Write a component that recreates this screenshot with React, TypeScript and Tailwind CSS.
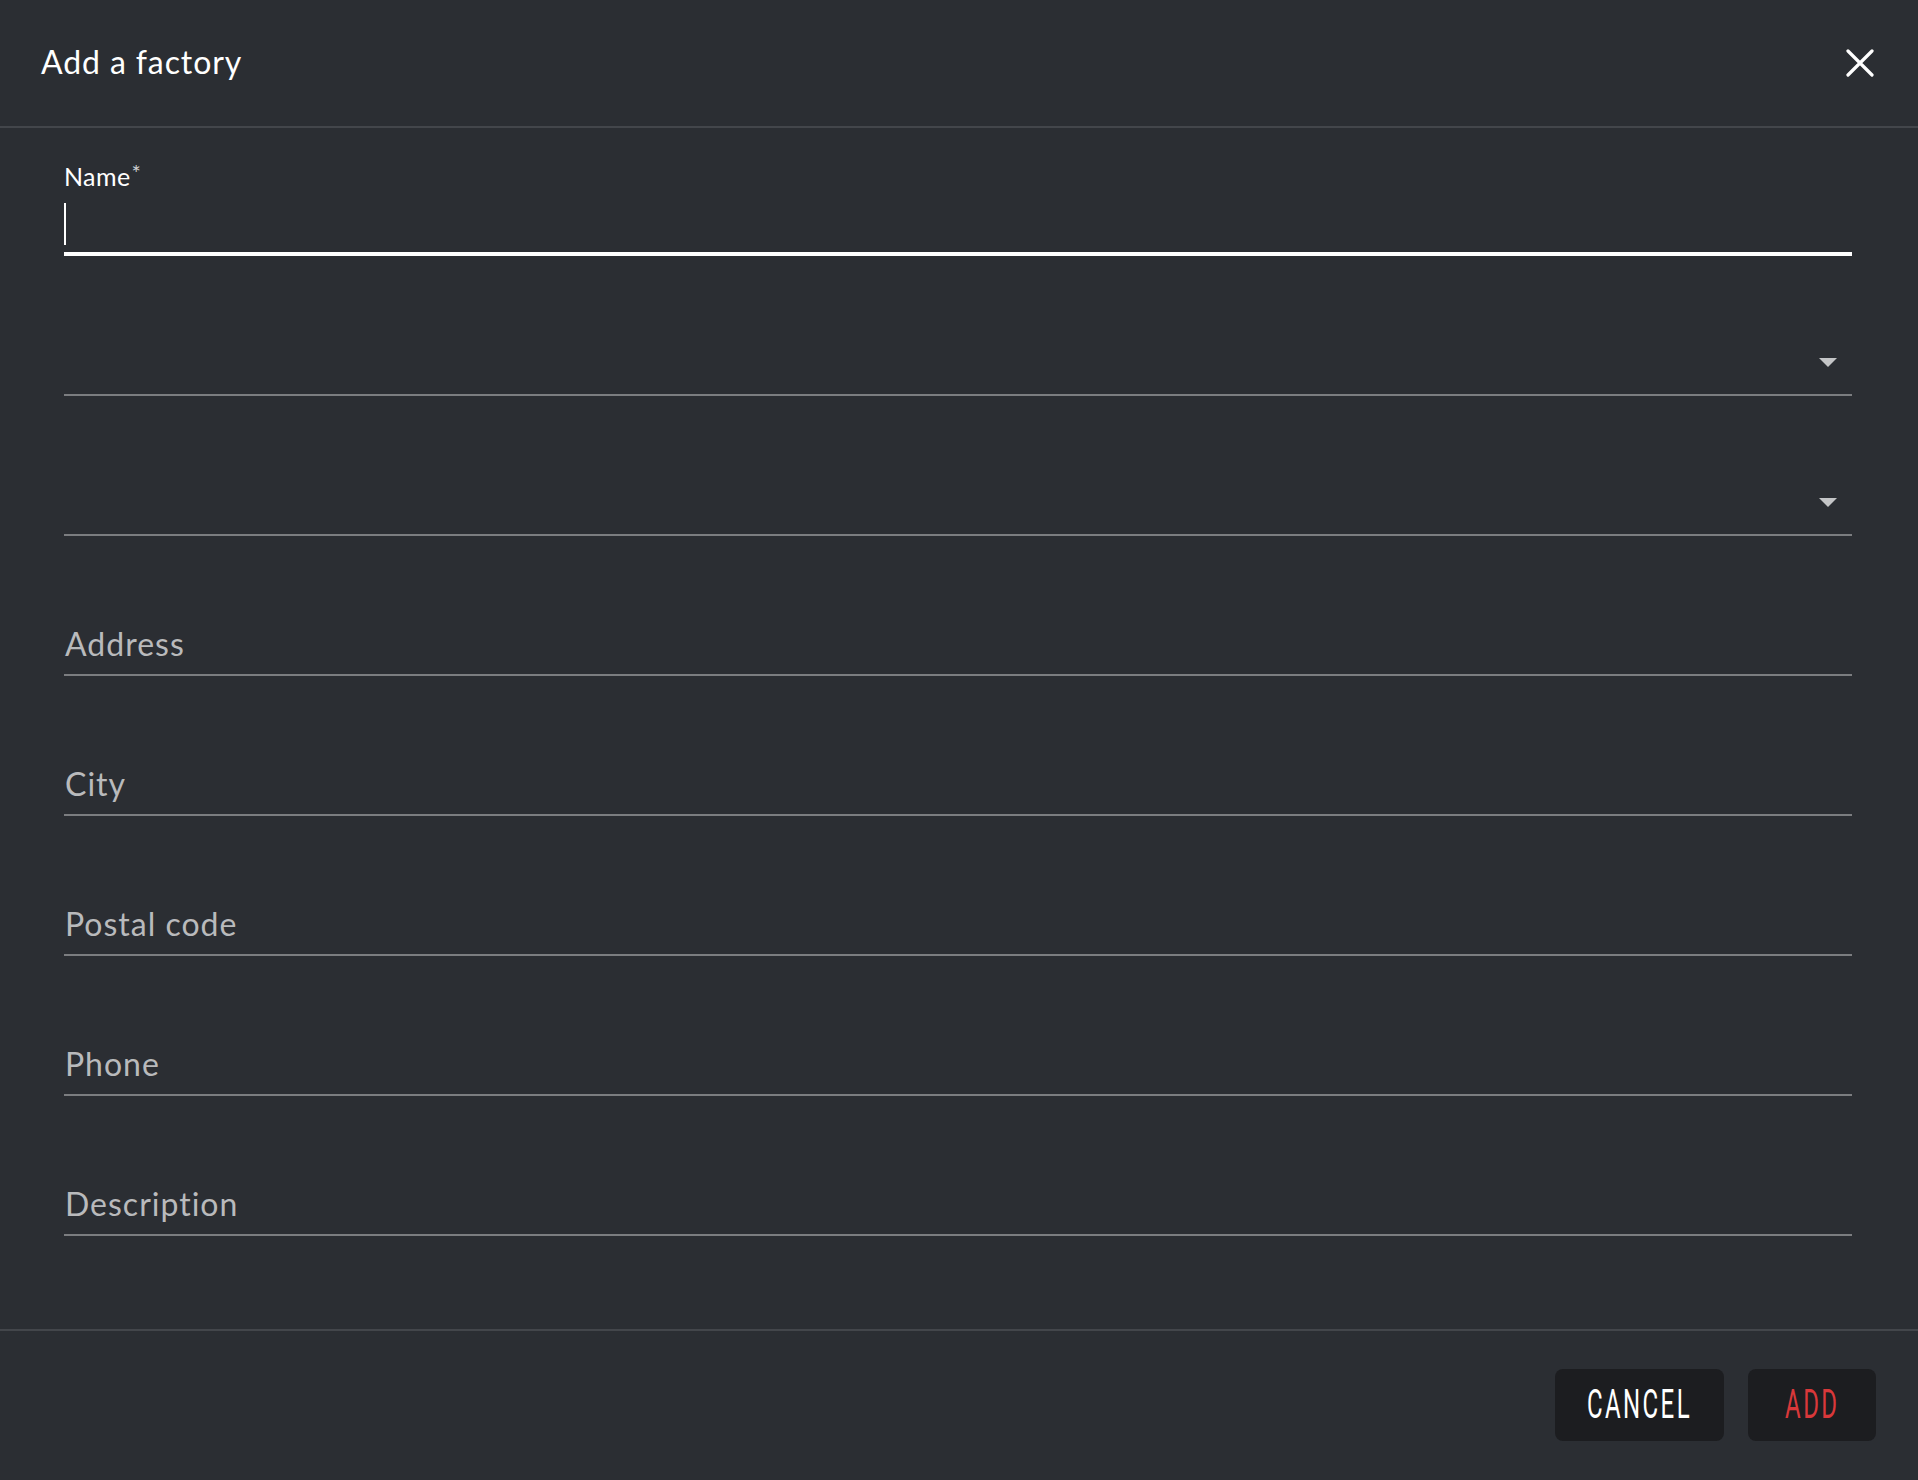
import React from "react";

const fields = [
  { label: "", select: true },
  { label: "", select: true },
  { label: "Address" },
  { label: "City" },
  { label: "Postal code" },
  { label: "Phone" },
  { label: "Description" },
];

function Caret() {
  return (
    <svg width="18" height="10" viewBox="0 0 18 10" className="mb-[26px] mr-[15px] shrink-0">
      <path d="M0 0 H18 L9 9 Z" fill="#c4c5c7" />
    </svg>
  );
}

export default function App() {
  return (
    <div className="w-[1918px] h-[1480px] bg-[#2b2e33] flex flex-col text-white font-['Lato',sans-serif]">
      {/* Header */}
      <div className="h-[128px] shrink-0 border-b-2 border-[#43464b] flex items-center justify-between pl-[41px] pr-[44px]">
        <h1 className="text-[32px] leading-none tracking-[0.9px] text-white mb-[3px]">Add a factory</h1>
        <svg width="28" height="28" viewBox="0 0 28 28">
          <path d="M2 2 L26 26 M26 2 L2 26" stroke="#ffffff" strokeWidth="3.2" strokeLinecap="round" />
        </svg>
      </div>

      {/* Body */}
      <div className="flex-1 flex flex-col pl-[64px] pr-[66px]">
        <div className="h-[128px] flex flex-col justify-end">
          <div className="text-[25px] leading-none tracking-[0.4px] text-white mb-[14px] flex items-start">
            Name<span className="text-[22px] leading-none -mt-[2px] ml-[1px] text-[#cfd0d2]">*</span>
          </div>
          <div className="h-[42px] flex items-stretch mb-[7px]">
            <span className="w-[2px] bg-white" />
          </div>
          <div className="h-[4px] bg-white" />
        </div>

        {fields.map((f, i) => (
          <div key={i} className="h-[140px] flex items-end justify-between border-b-2 border-[#7b7d80]">
            <span className="text-[32px] leading-none tracking-[1px] text-[#b9babc] mb-[14px] ml-px">{f.label}</span>
            {f.select && <Caret />}
          </div>
        ))}
      </div>

      {/* Footer */}
      <div className="h-[151px] shrink-0 border-t-2 border-[#43464b] flex items-center justify-end gap-[24px] pr-[42px] pb-px">
        <button className="w-[169px] h-[72px] rounded-[8px] bg-[#1c1d20] flex items-center justify-center">
          <span className="inline-block text-[40px] leading-none font-['Roboto',sans-serif] font-normal tracking-[4px] scale-x-[0.6] text-white">CANCEL</span>
        </button>
        <button className="w-[128px] h-[72px] rounded-[8px] bg-[#1c1d20] flex items-center justify-center">
          <span className="inline-block text-[40px] leading-none font-['Roboto',sans-serif] font-normal tracking-[4px] scale-x-[0.6] text-[#d9383a]">ADD</span>
        </button>
      </div>
    </div>
  );
}
